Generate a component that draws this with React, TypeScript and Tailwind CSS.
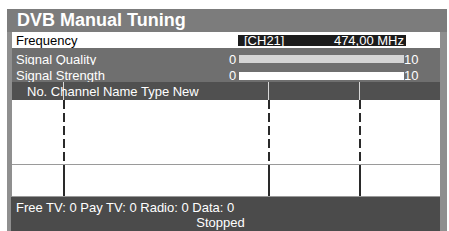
export default function App() {
  const dashed =
    "w-[2px] bg-[repeating-linear-gradient(to_bottom,#2a2a2a_0px,#2a2a2a_9px,transparent_9px,transparent_13px)]";
  return (
    <div className="w-[449px] h-[231px] bg-white overflow-hidden font-['Liberation_Sans',Arial,sans-serif]">
      <div className="ml-[7px] pt-[9px] w-[440px] h-[231px]">
        <div className="h-[222px] bg-[#8f8f8f] flex flex-col">
          <div className="h-[23px] bg-[#7c7c7c] pl-[10px] text-white font-bold text-[18px] leading-[23px]">
            DVB Manual Tuning
          </div>
          <div className="pl-[5px] pr-[7px] flex flex-col flex-1">
            <div className="h-[16px] bg-white flex items-center">
              <div className="w-[226px] pl-[4px] text-[13px] leading-none text-black">Frequency</div>
              <div className="w-[168px] h-[11px] bg-[#1c1c1c] text-white text-[13px] leading-[11px] flex justify-between pl-[6px] pr-[2px]">
                <span>[CH21]</span>
                <span>474,00 MHz</span>
              </div>
            </div>
            <div className="h-[17px] bg-[#6f6f6f] flex items-start text-white text-[13px] leading-[13px]">
              <div className="w-[217px] pl-[4px] mt-[5px]">Signal Quality</div>
              <div className="w-[10px] mt-[5px]">0</div>
              <div className="w-[165px] h-[8px] bg-[#d4d4d4] mt-[7px]"></div>
              <div className="mt-[5px]">10</div>
            </div>
            <div className="h-[17px] bg-[#6f6f6f] flex items-start text-white text-[13px] leading-[13px]">
              <div className="w-[217px] pl-[4px] mt-[4px]">Signal Strength</div>
              <div className="w-[10px] mt-[4px]">0</div>
              <div className="w-[165px] h-[8px] bg-white mt-[7px]"></div>
              <div className="mt-[4px]">10</div>
            </div>
            <div className="h-[18px] bg-[#505050] relative flex">
              <div className="w-[52px] border-r border-[#d8d8d8]"></div>
              <div className="w-[205px] border-r border-[#d8d8d8]"></div>
              <div className="w-[91px] border-r border-[#d8d8d8]"></div>
              <div className="absolute left-[15px] top-[2px] text-white text-[13px] leading-[16px]">
                No. Channel Name Type New
              </div>
            </div>
            <div className="bg-white flex flex-col flex-1">
              <div className="h-[64px] flex">
                <div className="w-[51px]"></div>
                <div className={dashed}></div>
                <div className="w-[203px]"></div>
                <div className={dashed}></div>
                <div className="w-[89px]"></div>
                <div className={dashed}></div>
              </div>
              <div className="h-[1px] bg-[#9a9a9a]"></div>
              <div className="h-[31px] flex">
                <div className="w-[51px]"></div>
                <div className="w-[2px] bg-[#2a2a2a]"></div>
                <div className="w-[203px]"></div>
                <div className="w-[2px] bg-[#2a2a2a]"></div>
                <div className="w-[89px]"></div>
                <div className="w-[2px] bg-[#2a2a2a]"></div>
              </div>
              <div className="h-[1px] bg-[#9a9a9a]"></div>
            </div>
          </div>
          <div className="h-[34px] ml-[4px] mr-[7px] bg-[#4b4b4b] text-white text-[13px] leading-[15px] pt-[3px]">
            <div className="pl-[5px]">Free TV: 0 Pay TV: 0 Radio: 0 Data: 0</div>
            <div className="text-center pr-[10px]">Stopped</div>
          </div>
        </div>
      </div>
    </div>
  );
}
